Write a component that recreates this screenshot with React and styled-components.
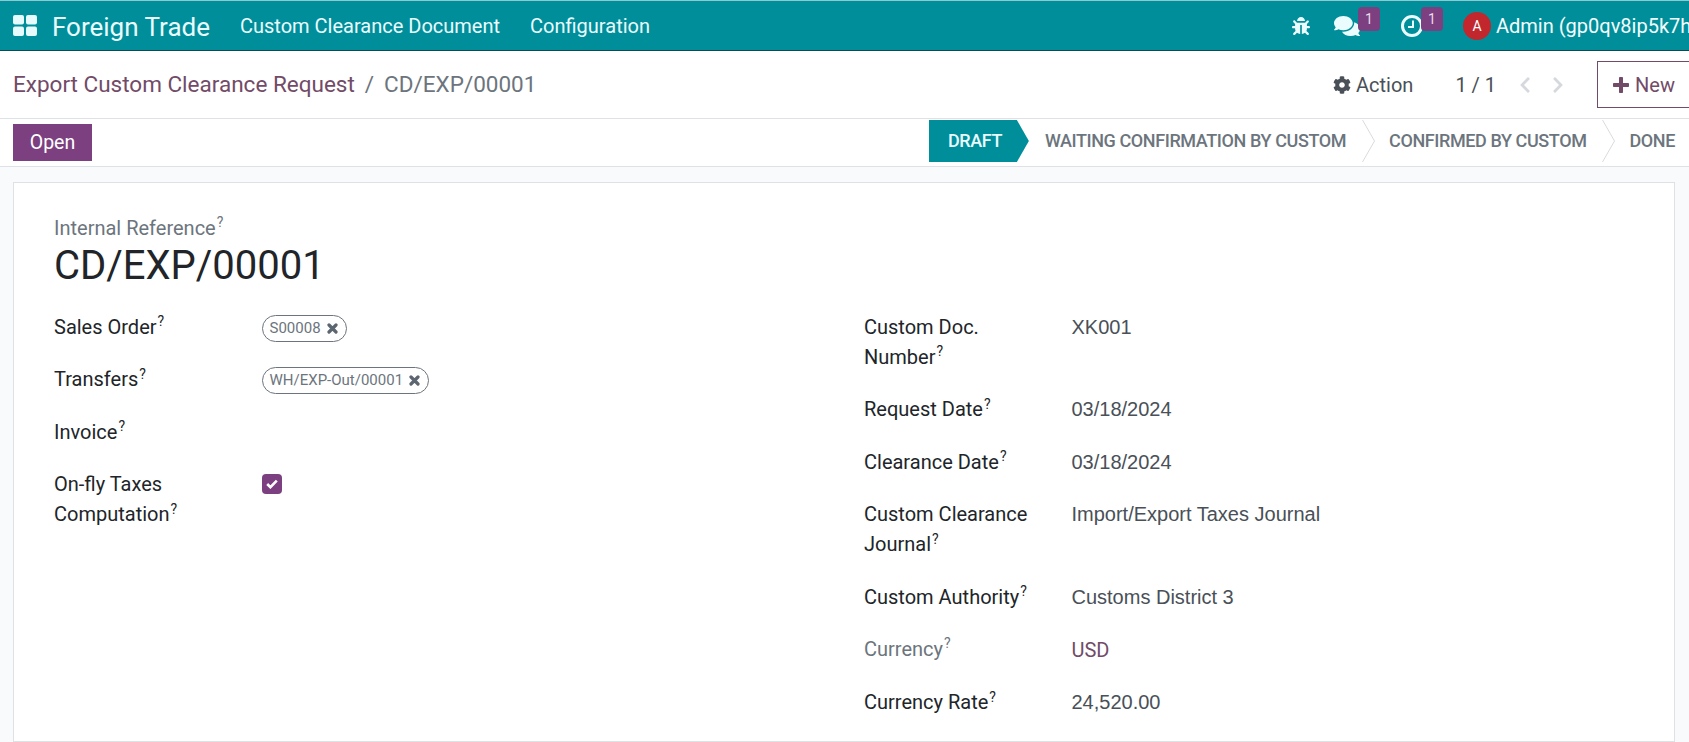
import React from "react";
import styled, { createGlobalStyle } from "styled-components";
import { FaBug, FaComments, FaCog, FaChevronLeft, FaChevronRight } from "react-icons/fa";

const Global = createGlobalStyle`
  html, body { margin: 0; padding: 0; height: 100%; overflow: hidden; background: #f9fafb; }
  body { font-family: Roboto, "Noto Sans", sans-serif; color: #212529; }
  #root { height: 100%; }
`;

const Page = styled.div`
  width: 1689px; height: 742px; overflow: hidden; display: flex; flex-direction: column;
`;
const Navbar = styled.header`
  height: 51px; box-sizing: border-box; flex: none; display: flex; align-items: center;
  background: #008e9b; border-top: 1px solid #8fc9d0; border-bottom: 1px solid #0b4a52; color: #eafcfd;
`;
const NavLeft = styled.div`
  flex: 0 0 1280px; display: flex; align-items: center; padding-left: 13px; box-sizing: border-box;
`;
const Brand = styled.span`
  font-size: 26px; padding-top: 2px; margin-left: 15px; margin-right: 30px; white-space: nowrap; color: #eafcfd;
`;
const NavItem = styled.span`
  font-size: 20px; margin-right: 30px; white-space: nowrap;
`;
const NavRight = styled.div`
  flex: none; display: flex; align-items: center; white-space: nowrap;
`;
const IconWrap = styled.span`
  position: relative; display: inline-flex; align-items: center; margin-left: ${p => p.$ml}px; height: 49px;
`;
const Badge = styled.span`
  position: absolute; top: 6px; left: ${p => p.$left}px; width: 22px; height: 24px; border-radius: 4px;
  background: #7c3f80; color: #e9dbea; font-size: 14px; display: flex; align-items: center; justify-content: center;
`;
const Avatar = styled.span`
  width: 28px; height: 28px; border-radius: 50%; background: #c1272d; color: #fff; font-size: 14px;
  display: flex; align-items: center; justify-content: center; margin-left: 39px;
`;
const UserName = styled.span`
  font-size: 20px; margin-left: 5px; color: #f4fefe;
`;
const ControlPanel = styled.section`
  background: #fff; flex: none; border-bottom: 1px solid #dee2e6;
`;
const TopRow = styled.div`
  height: 68px; box-sizing: border-box; display: flex; align-items: center; border-bottom: 1px solid #dee2e6;
  padding-left: 13px;
`;
const Crumbs = styled.div`
  flex: 0 0 1320px; font-size: 22.5px; padding-bottom: 2px; white-space: nowrap; display: flex; align-items: center;
`;
const CrumbLink = styled.span` color: #714B67; `;
const CrumbSep = styled.span` color: #6c757d; margin: 0 10px; `;
const CrumbCurrent = styled.span` color: #6c757d; `;
const ActionBtn = styled.span`
  display: inline-flex; align-items: center; gap: 5px; font-size: 20px; color: #495057; white-space: nowrap;
`;
const Pager = styled.span`
  font-size: 20px; color: #495057; margin-left: 42px; white-space: nowrap;
`;
const PagerArrows = styled.span`
  display: inline-flex; gap: 15px; margin-left: 20px; color: #d5d9dd; align-items: center;
`;
const NewBtn = styled.span`
  display: inline-flex; align-items: center; gap: 6px; box-sizing: border-box; height: 47px;
  margin-left: 30px; padding: 0 40px 0 15px; border: 1px solid #714B67; color: #714B67; font-size: 20px; flex: none;
`;
const StatusRow = styled.div`
  height: 47px; display: flex; align-items: center; justify-content: space-between; padding: 0 14px 0 13px;
`;
const OpenBtn = styled.span`
  background: #7c3f80; color: #fff; width: 79px; height: 37px; font-size: 19.5px;
  display: flex; align-items: center; justify-content: center;
`;
const Steps = styled.div`
  display: flex; align-items: center; height: 42px; margin-bottom: 3px;
`;
const ActiveStep = styled.span`
  width: 100px; height: 42px; background: #008e9b; color: #e9fbfc; font-size: 18px; font-weight: 500; letter-spacing: -0.4px;
  clip-path: polygon(0 0, 88px 0, 100px 50%, 88px 100%, 0 100%);
  display: flex; align-items: center; padding: 0 0 2px 19px; box-sizing: border-box;
`;
const Step = styled.span`
  font-size: 18px; font-weight: 500; letter-spacing: -0.4px; color: #6c757d; white-space: nowrap; padding-bottom: 2px;
  margin-left: ${p => p.$ml}px;
`;
const Sep = styled.svg`
  width: 13px; height: 42px; flex: none; margin-left: ${p => p.$ml}px;
`;
const Content = styled.main`
  flex: 1; padding: 15px 14px 0 13px; min-height: 0;
`;
const Card = styled.div`
  background: #fff; border: 1px solid #dee2e6; height: 100%; box-sizing: border-box; padding: 31px 40px 0;
`;
const RefLabel = styled.div`
  font-size: 20px; line-height: 27px; color: #6c757d; padding-top: 1px; margin-bottom: -1px;
`;
const Sup = styled.sup`
  font-size: 14px; line-height: 0; color: inherit; vertical-align: super; margin-left: 1px;
`;
const Title = styled.div`
  font-size: 40px; line-height: 50px; color: #212529; margin-bottom: 21px;
`;
const Columns = styled.div`
  display: grid; grid-template-columns: 810px 1fr;
`;
const FieldGrid = styled.div`
  display: grid; grid-template-columns: 207.5px 1fr; row-gap: 22.4px; align-content: start;
`;
const Label = styled.div`
  font-size: 20px; line-height: 30px; color: ${p => (p.$muted ? "#6c757d" : "#212529")};
`;
const LabelLine = styled.span`
  display: block; white-space: nowrap;
`;
const Value = styled.div`
  font-family: "Liberation Sans", Arial, sans-serif; font-size: 20px; line-height: 30px; color: #495057;
`;
const LinkValue = styled.div`
  font-size: 20px; line-height: 30px; padding-top: 1px; color: #714B67;
`;
const TagCell = styled.div`
  display: flex; align-items: center; height: 30px; padding-top: 2px; box-sizing: border-box;
`;
const Tag = styled.span`
  display: inline-flex; align-items: center; height: 27px; box-sizing: border-box; padding: 0 8px 0 7px;
  border: 1px solid #6c757d; border-radius: 14px; font-size: 15px; color: #6c757d; gap: 6px; white-space: nowrap;
`;
const Check = styled.span`
  width: 20px; height: 20px; border-radius: 4px; background: #7c3f80; color: #fff;
  display: flex; align-items: center; justify-content: center; margin-top: 5px;
`;

function ClockIcon() {
  return (
    <svg width="24" height="24" viewBox="0 0 24 24" fill="none" stroke="#eafcfd">
      <circle cx="12" cy="12" r="9.5" strokeWidth="3" />
      <path d="M13 6.5v6.5H8" strokeWidth="2" />
    </svg>
  );
}
function AppsIcon() {
  return (
    <svg width="24" height="21" viewBox="0 0 24 21" fill="#e6fbfc">
      <rect x="0" y="0" width="11" height="9.5" rx="2" />
      <rect x="13" y="0" width="11" height="9.5" rx="2" />
      <rect x="0" y="11.5" width="11" height="9.5" rx="2" />
      <rect x="13" y="11.5" width="11" height="9.5" rx="2" />
    </svg>
  );
}
function PlusIcon() {
  return (
    <svg width="16" height="16" viewBox="0 0 16 16" fill="currentColor">
      <rect x="6" y="0" width="4" height="16" rx="0.8" />
      <rect x="0" y="6" width="16" height="4" rx="0.8" />
    </svg>
  );
}
function CrossIcon() {
  return (
    <svg width="11" height="11" viewBox="0 0 11 11" fill="none" stroke="#5c6670" strokeWidth="3.2" strokeLinecap="round">
      <path d="M2 2l7 7M9 2l-7 7" />
    </svg>
  );
}
function TickIcon() {
  return (
    <svg width="12" height="10" viewBox="0 0 12 10" fill="none" stroke="#fff" strokeWidth="2.6">
      <path d="M1.2 5l3.2 3.2L10.8 1.6" />
    </svg>
  );
}
const Q = () => <Sup>?</Sup>;
const Chevron = ({ ml }) => (
  <Sep $ml={ml} viewBox="0 0 13 42" fill="none" stroke="#d8dbde">
    <path d="M0.5 0L12.5 21L0.5 42" />
  </Sep>
);

export default function App() {
  return (
    <Page>
      <Global />
      <Navbar>
        <NavLeft>
          <AppsIcon />
          <Brand>Foreign Trade</Brand>
          <NavItem>Custom Clearance Document</NavItem>
          <NavItem>Configuration</NavItem>
        </NavLeft>
        <NavRight>
          <IconWrap $ml={12}><FaBug size={18} /></IconWrap>
          <IconWrap $ml={24}>
            <FaComments size={26} />
            <Badge $left={24}>1</Badge>
          </IconWrap>
          <IconWrap $ml={40}>
            <ClockIcon />
            <Badge $left={21}>1</Badge>
          </IconWrap>
          <Avatar>A</Avatar>
          <UserName>Admin (gp0qv8ip5k7h</UserName>
        </NavRight>
      </Navbar>
      <ControlPanel>
        <TopRow>
          <Crumbs>
            <CrumbLink>Export Custom Clearance Request</CrumbLink>
            <CrumbSep>/</CrumbSep>
            <CrumbCurrent>CD/EXP/00001</CrumbCurrent>
          </Crumbs>
          <ActionBtn><FaCog size={18} />Action</ActionBtn>
          <Pager>1 / 1</Pager>
          <PagerArrows><FaChevronLeft size={18} /><FaChevronRight size={18} /></PagerArrows>
          <NewBtn><PlusIcon />New</NewBtn>
        </TopRow>
        <StatusRow>
          <OpenBtn>Open</OpenBtn>
          <Steps>
            <ActiveStep>DRAFT</ActiveStep>
            <Step $ml={16}>WAITING CONFIRMATION BY CUSTOM</Step>
            <Chevron ml={16} />
            <Step $ml={14}>CONFIRMED BY CUSTOM</Step>
            <Chevron ml={15} />
            <Step $ml={15}>DONE</Step>
          </Steps>
        </StatusRow>
      </ControlPanel>
      <Content>
        <Card>
          <RefLabel>Internal Reference<Q /></RefLabel>
          <Title>CD/EXP/00001</Title>
          <Columns>
            <FieldGrid>
              <Label>Sales Order<Q /></Label>
              <TagCell><Tag>S00008<CrossIcon /></Tag></TagCell>
              <Label>Transfers<Q /></Label>
              <TagCell><Tag>WH/EXP-Out/00001<CrossIcon /></Tag></TagCell>
              <Label>Invoice<Q /></Label>
              <div />
              <Label>
                <LabelLine>On-fly Taxes</LabelLine>
                <LabelLine>Computation<Q /></LabelLine>
              </Label>
              <div><Check><TickIcon /></Check></div>
            </FieldGrid>
            <FieldGrid>
              <Label>
                <LabelLine>Custom Doc.</LabelLine>
                <LabelLine>Number<Q /></LabelLine>
              </Label>
              <Value>XK001</Value>
              <Label>Request Date<Q /></Label>
              <Value>03/18/2024</Value>
              <Label>Clearance Date<Q /></Label>
              <Value>03/18/2024</Value>
              <Label>
                <LabelLine>Custom Clearance</LabelLine>
                <LabelLine>Journal<Q /></LabelLine>
              </Label>
              <Value>Import/Export Taxes Journal</Value>
              <Label>Custom Authority<Q /></Label>
              <Value>Customs District 3</Value>
              <Label $muted>Currency<Q /></Label>
              <LinkValue>USD</LinkValue>
              <Label>Currency Rate<Q /></Label>
              <Value>24,520.00</Value>
            </FieldGrid>
          </Columns>
        </Card>
      </Content>
    </Page>
  );
}
